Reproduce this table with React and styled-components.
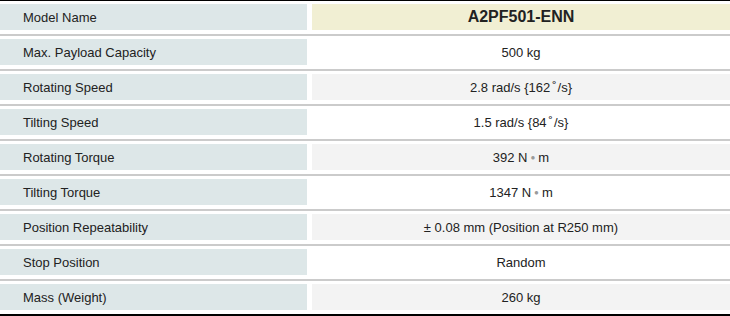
import React from "react";
import styled, { createGlobalStyle } from "styled-components";

const GlobalStyle = createGlobalStyle`
  html, body {
    margin: 0;
    padding: 0;
    background: #ffffff;
  }
  body {
    font-family: Arial, "Liberation Sans", Helvetica, sans-serif;
    color: #222222;
  }
`;

const Table = styled.div`
  width: 730px;
  border-top: 1px solid #000000;
  border-bottom: 2px solid #000000;
  display: flex;
  flex-direction: column;
`;

const Row = styled.div`
  display: grid;
  grid-template-columns: 307px 1fr;
  column-gap: 5px;
  padding: 3px 0 4px;
  border-bottom: 2px solid #cbcbcb;

  &:last-child {
    border-bottom: none;
  }
`;

const Label = styled.div`
  height: 26px;
  display: flex;
  align-items: center;
  padding-left: 23px;
  background: #dde7e8;
  font-size: 13px;
`;

const Value = styled.div`
  height: 26px;
  display: flex;
  align-items: center;
  justify-content: center;
  background: ${(p) => (p.$head ? "#f1efd3" : p.$shade ? "#f3f3f3" : "#ffffff")};
  font-size: ${(p) => (p.$head ? "16px" : "13px")};
  font-weight: ${(p) => (p.$head ? "bold" : "normal")};
`;

const Dot = styled.span`
  color: #9a9a9a;
  font-size: 8px;
  margin: 0 3px;
`;

const Deg = styled.span`
  margin: 0 1px 0 2px;
  position: relative;
  top: -1px;
`;

const specs = [
  ["Model Name", "A2PF501-ENN"],
  ["Max. Payload Capacity", "500 kg"],
  [
    "Rotating Speed",
    <>
      2.8 rad/s {"{"}162<Deg>˚</Deg>/s{"}"}
    </>,
  ],
  [
    "Tilting Speed",
    <>
      1.5 rad/s {"{"}84<Deg>˚</Deg>/s{"}"}
    </>,
  ],
  [
    "Rotating Torque",
    <>
      392 N<Dot>●</Dot>m
    </>,
  ],
  [
    "Tilting Torque",
    <>
      1347 N<Dot>●</Dot>m
    </>,
  ],
  ["Position Repeatability", "± 0.08 mm (Position at R250 mm)"],
  ["Stop Position", "Random"],
  ["Mass (Weight)", "260 kg"],
];

export default function App() {
  return (
    <>
      <GlobalStyle />
      <Table>
        {specs.map(([label, value], i) => (
          <Row key={label}>
            <Label>{label}</Label>
            <Value $head={i === 0} $shade={i % 2 === 0}>
              {value}
            </Value>
          </Row>
        ))}
      </Table>
    </>
  );
}
